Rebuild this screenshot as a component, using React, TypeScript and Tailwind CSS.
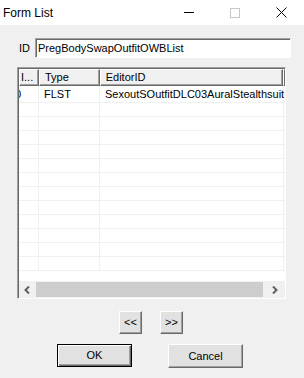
const raised = "border border-t-white border-l-white border-r-[#696969] border-b-[#696969] shadow-[inset_-1px_-1px_0_#a0a0a0]";

const Btn = ({ label, cls }: { label: string; cls: string }) => (
  <div className={`flex items-center justify-center bg-[#e1e1e1] text-[11px] text-black ${cls}`}>{label}</div>
);

export default function App() {
  const rows = Array.from({ length: 12 });
  return (
    <div className="w-[304px] h-[378px] bg-[#f0f0f0] flex flex-col overflow-hidden" style={{ fontFamily: '"Liberation Sans", Arial, sans-serif' }}>
      {/* title bar */}
      <div className="h-[25px] bg-white flex items-center shrink-0">
        <span className="pl-[3px] text-[12px] text-black">Form List</span>
        <div className="ml-auto flex items-center h-full">
          <div className="w-[46px] h-full flex items-center justify-center">
            <div className="w-[10px] h-px bg-black" />
          </div>
          <div className="w-[46px] h-full flex items-center justify-center">
            <div className="w-[10px] h-[10px] border border-[#c8c8c8]" />
          </div>
          <div className="w-[46px] h-full flex items-center justify-center">
            <svg width="11" height="11" viewBox="0 0 11 11"><path d="M0.5 0.5L10.5 10.5M10.5 0.5L0.5 10.5" stroke="#000" strokeWidth="1" /></svg>
          </div>
        </div>
      </div>

      {/* ID row */}
      <div className="flex items-center mt-[13px] h-[20px]">
        <span className="ml-[19px] w-[16px] text-[11px] text-black">ID</span>
        <div className="w-[256px] h-[20px] bg-white border border-t-[#a0a0a0] border-l-[#a0a0a0] border-r-white border-b-white shadow-[inset_1px_1px_0_#696969] flex items-center pl-[2px] text-[11px] text-black">
          PregBodySwapOutfitOWBList
        </div>
      </div>

      {/* list */}
      <div className="ml-[17px] mt-[9px] w-[269px] h-[232px] bg-white border border-t-[#a0a0a0] border-l-[#a0a0a0] border-r-white border-b-white shadow-[inset_1px_1px_0_#696969] flex flex-col overflow-hidden">
        <div className="flex h-[17px] shrink-0 bg-[#f0f0f0] text-[11px] text-black ml-px mt-px">
          <div className={`w-[20px] ${raised} pl-[1px] leading-[14px]`}>I...</div>
          <div className={`w-[61px] ${raised} pl-[5px] leading-[14px]`}>Type</div>
          <div className={`w-[184px] ${raised} pl-[5px] leading-[14px]`}>EditorID</div>
          <div className={`flex-1 ${raised}`} />
        </div>
        <div className="flex-1 relative overflow-hidden ml-px">
          <div className="flex h-[17px] border-b border-[#f0f0f0] text-[11px] text-black items-center">
            <div className="w-[20px] border-r border-[#f0f0f0] h-full flex items-center overflow-hidden"><span className="-ml-[4px]">0</span></div>
            <div className="w-[61px] border-r border-[#f0f0f0] h-full flex items-center pl-[5px]">FLST</div>
            <div className="w-[184px] border-r border-[#f0f0f0] h-full flex items-center pl-[5px] whitespace-nowrap">SexoutSOutfitDLC03AuralStealthsuit</div>
          </div>
          {rows.map((_, i) => (
            <div key={i} className="flex h-[14px] border-b border-[#f0f0f0]">
              <div className="w-[20px] border-r border-[#f0f0f0]" />
              <div className="w-[61px] border-r border-[#f0f0f0]" />
              <div className="w-[184px] border-r border-[#f0f0f0]" />
            </div>
          ))}
        </div>
        {/* scrollbar */}
        <div className="h-[17px] shrink-0 flex items-center bg-[#f0f0f0] ml-px">
          <div className="w-[17px] h-full flex items-center justify-center">
            <svg width="7" height="8" viewBox="0 0 7 8"><path d="M5 0.5L1.5 4L5 7.5" stroke="#606060" strokeWidth="2" fill="none" /></svg>
          </div>
          <div className="w-[227px] h-[15px] bg-[#cdcdcd]" />
          <div className="flex-1 h-full flex items-center justify-center">
            <svg width="7" height="8" viewBox="0 0 7 8"><path d="M2 0.5L5.5 4L2 7.5" stroke="#606060" strokeWidth="2" fill="none" /></svg>
          </div>
        </div>
      </div>

      {/* nav buttons */}
      <div className="flex mt-[12px] ml-[119px] gap-[18px]">
        <Btn label="<<" cls={`w-[23px] h-[23px] ${raised}`} />
        <Btn label=">>" cls={`w-[23px] h-[23px] ${raised}`} />
      </div>

      {/* OK / Cancel */}
      <div className="flex mt-[10px] ml-[57px] gap-[36px]">
        <Btn label="OK" cls="w-[75px] h-[23px] border border-black shadow-[inset_1px_1px_0_#fff,inset_-1px_-1px_0_#696969,inset_-2px_-2px_0_#a0a0a0]" />
        <Btn label="Cancel" cls={`w-[75px] h-[24px] ${raised}`} />
      </div>
    </div>
  );
}
